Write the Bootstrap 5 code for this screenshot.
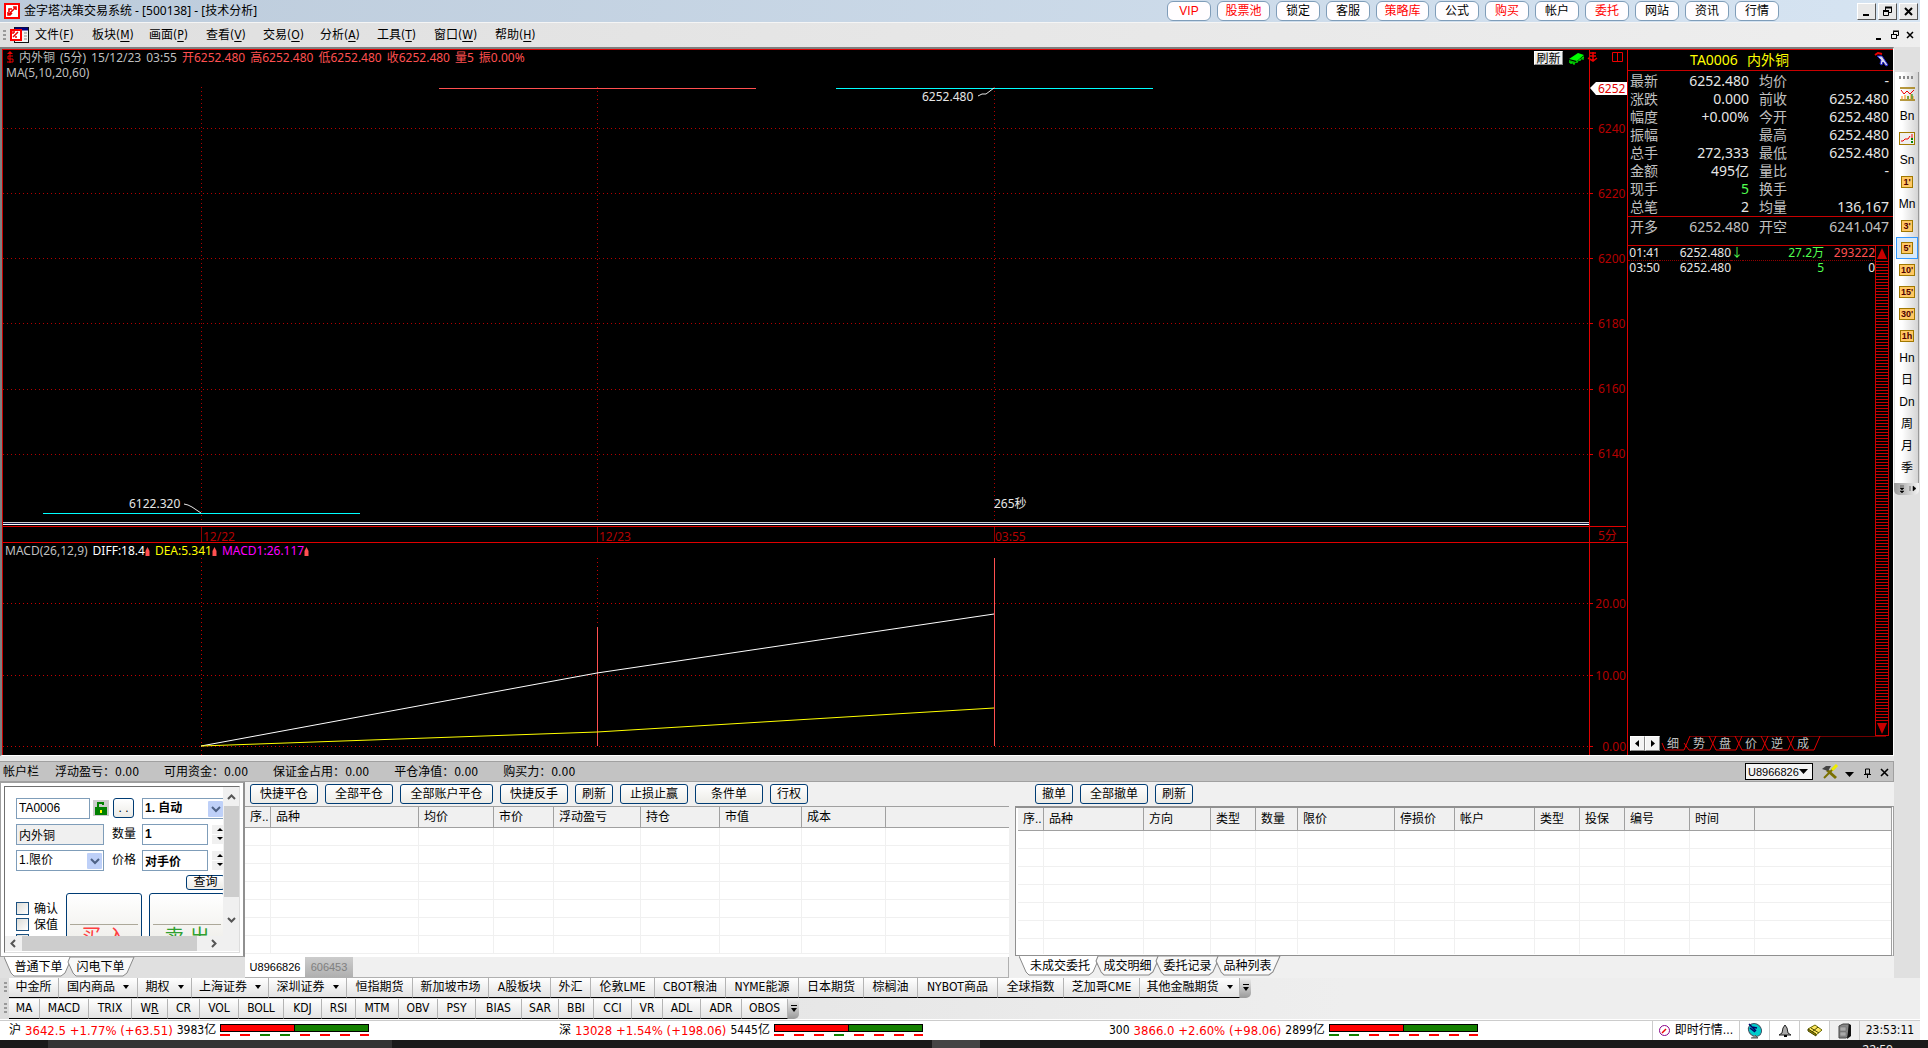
<!DOCTYPE html>
<html lang="zh-CN">
<head>
<meta charset="utf-8">
<meta name="viewport" content="width=device-width, initial-scale=1">
<title>金字塔决策交易系统</title>
<link href="https://cdn.jsdelivr.net/npm/bootstrap@5.3.0/dist/css/bootstrap.min.css" rel="stylesheet">
<style>
:root{--seg:"Noto Sans","Noto Sans CJK SC",sans-serif;--tah:"DejaVu Sans Condensed","DejaVu Sans","Noto Sans CJK SC",sans-serif;--sim:"Liberation Sans","Noto Sans CJK SC",sans-serif;--red:#c80000}
body{font:12px/16px var(--sim);color:#000;background:#fff;overflow:hidden}
button,input,select{font:inherit;color:inherit;padding:0;margin:0}
button{border:0;background:none;white-space:nowrap}
.app-window{margin-right:8px}
/* title and menu */
.title-bar{height:22px;background:linear-gradient(90deg,#bccbdb,#d6e4f2);font-family:var(--seg);padding-left:4px}
.quick-links{gap:6px;margin-right:78px}
.quick-links button{width:44px;height:20px;border:1px solid #7f9db9;border-radius:6px;background:#fffdff;font-family:var(--sim);line-height:16px}
.quick-links .wide{width:53px}
.hot{color:#f00}
.win-btns{gap:2px;padding-right:2px}
.win-btns button{width:19px;height:17px;background:#e8e8e8;border:1px solid;border-color:#fff #555 #555 #fff;display:flex;align-items:center;justify-content:center}
.menu-strip{height:25px;background:linear-gradient(90deg,#dfdfdf,#eee);font-family:var(--tah);padding-left:3px;border-top:1px solid #f5f5f5}
.menu-items{display:grid;grid-template-columns:repeat(7,57px) 61px 57px;margin-left:5px}
.menu-items a{color:#000;text-decoration:none}
.menu-items u{text-underline-offset:2px}
.grip{width:3px;height:10px;background:repeating-linear-gradient(#999 0 2px,transparent 2px 4px)}
/* chart */
.black-area{background:#000;border-top:2px solid #808080;border-left:2px solid #808080;border-right:1px solid #fff;border-bottom:1px solid #fff}
.chart-col{border-top:1px solid #e00000;border-left:1px solid var(--red);font-family:var(--seg);min-width:0}
.plot{display:block;width:100%;overflow:visible}
.plot text,.axis text{font:12px var(--seg)}
.axis{display:block;width:38px;flex:none;border-left:1px solid #e00000;overflow:visible}
.pane-a{border-bottom:1px solid #e00000}
.head-a{left:3px;top:0;line-height:15px;color:#bfbfbf;white-space:nowrap}
.head-b{left:2px;top:0;line-height:16px;color:#bfbfbf;white-space:nowrap}
.readout{display:flex;align-items:center;gap:5px}
.tools-a{right:0;top:1px;height:14px}
.tools-a button{background:#eee;color:#000;width:29px;height:14px;line-height:13px;border:1px solid;border-color:#fff #888 #888 #fff}
.salmon{color:#ff5050}
.c-yellow{color:#ff0}
.c-mag{color:#f0f}
/* quote */
.quote-col{width:266px;border-left:1px solid #e00000;border-top:1px solid #e00000;font:14px/18px var(--seg);color:#c0c0c0;flex:none}
.quote-title{height:21px;color:#ff0;border-bottom:1px solid var(--red);gap:9px;padding-right:42px}
.quote-list{display:grid;grid-template-columns:30px 89px 10px 30px 1fr;padding:1px 4px 0 2px;border-bottom:1px solid var(--red);white-space:nowrap}
.quote-list dd,.quote-list dt{margin:0;font-weight:400}
.quote-list dd{text-align:right;color:#e6e6e6}
.quote-list dt:nth-of-type(even){grid-column:4}
.q-open{height:29px}
.q-open dd{color:#c0c0c0}
.green{color:#50ff50 !important}
.ticks{font-size:12px;line-height:14px;table-layout:fixed;width:100%;color:#e6e6e6;border-collapse:collapse}
.ticks td{padding:0;text-align:right}
.ticks tr:first-child td{border-bottom:1px dotted #900000}
.v-scroll{width:16px;border:1px solid var(--red);border-top:0;border-bottom:0;background:repeating-linear-gradient(#c80000 0 1px,#000 1px 3px)}
.v-scroll button{height:16px;width:100%;background:#000;border-bottom:1px solid var(--red);display:flex;align-items:center;justify-content:center}
.v-scroll button:last-child{border-top:1px solid var(--red)}
.q-tabs{height:19px;padding-left:2px}
.q-tabs .arrow-btn{width:15px;height:15px;background:#f4f4f4;border:1px solid;border-color:#fff #888 #888 #fff;display:flex;align-items:center;justify-content:center}
.q-tabs .tab-box{height:15px}
.tab-box svg{left:0;top:0}
.q-tabs .names button{width:26px;color:#c0c0c0;font:12px/16px var(--sim)}
/* right rail */
.rail{width:26px;flex:none;background:#e0e0e0;padding-top:25px}
.rail-bar{width:24px;background:linear-gradient(90deg,#fff 30%,#d4d4d4);border-right:1px solid #999;margin-left:1px;padding:4px 0}
.rail-bar button{height:22px;width:22px;display:flex;align-items:center;justify-content:center;margin-left:1px}
.rail-bar b{font:bold 9px/10px var(--sim);background:#ffc864;border:1px solid #a07800;padding:0 1px;min-width:12px;height:12px;color:#500000}
.rail-bar .chosen{border:1px solid #3399ff;background:#d9eaf9}
.rail-dots{height:3px;width:14px;margin-left:4px;margin-bottom:4px;background:repeating-linear-gradient(90deg,#888 0 2px,transparent 2px 4px)}
.rail-foot{height:12px;width:25px;background:linear-gradient(90deg,#999,#f4f4f4);border-radius:0 0 5px 5px}
/* account bar */
.splitter{height:5px;background:#e6e6e6}
.acct{height:21px;background:#c3c3c3;border:1px solid #a0a0a0;border-left:0;padding-left:3px}
.acct span{margin-right:25px}
.acct .acct-name{margin-right:16px}
.acct b{font:12px var(--tah)}
.acct select{width:68px;height:17px;border:1px solid #000;background:#f4f4f4;appearance:none;font-size:11px;padding-left:2px;border-radius:0}
.caret-host{position:relative}
.caret-host svg{position:absolute;right:4px;top:6px;pointer-events:none}
.dock-bg{background:#f0f0f0}
/* order form */
.order-col{width:245px;flex:none;background:#e0e0e0}
.order-frame{height:175px;background:#fff;border:1px solid #a0a0a0;border-right:2px solid #909090;padding:3px}
.order-in{border:1px solid #707070;border-right-color:#ddd;border-bottom-color:#ddd;height:100%;display:grid;grid-template:149px 15px/218px 16px}
.order-view{overflow:hidden;padding:10px 0 0 11px}
.order-row{display:flex;align-items:center;height:22px;margin-bottom:4px;white-space:nowrap;width:230px}
.order-row label{margin:0 6px 0 8px}
.field{border:1px solid #7f9db9;height:21px;background:#fff;padding-left:2px;border-radius:0;appearance:none}
.w74{width:74px}.w87{width:88px}.w66{width:66px}.w80{width:83px}.w89{width:88px}
.read-only{background:#f0f0f0}
.drop{position:relative}
.drop svg{position:absolute;right:2px;top:3px;pointer-events:none}
.xp{height:20px;border:1px solid #003c74;border-radius:3px;background:linear-gradient(#fff,#ecebe6);line-height:18px;text-align:center}
.pick{width:21px;margin-right:8px}
.lock{margin:0 4px 0 3px}
.spin{display:flex;flex-direction:column;gap:1px}
.spin button{background:#f0f0f0;height:9px;width:15px;line-height:0}
.order-row.ask{height:14px;padding-left:170px}
.ask .xp{height:15px;line-height:12px;width:39px}
.deals{width:240px}
.checks{padding-top:9px;width:50px}
.checks label{display:flex;height:16px;align-items:flex-start;gap:5px;line-height:14px}
.checks input{appearance:none;width:13px;height:13px;border:1px solid #1d5281;background:linear-gradient(135deg,#dcdcd7,#fff)}
.deal{width:76px;height:60px;margin-right:7px;padding:27px 3px 0;font-size:20px;line-height:24px}
.deal span{display:block;border-top:1px solid #aca899}
.buy{color:#ff4040}.sell{color:#30a030}
.sb{background:#f0f0f0;display:flex;align-items:center}
.sb i{background:#cdcdcd;display:block}
.sb.vert{flex-direction:column;padding:7px 0 13px}
.sb.vert i{width:15px;height:100px;margin:6px 0 20px}
.sb.horz{padding-left:5px}
.sb.horz i{height:15px;width:175px;margin:0 14px 0 6px}
.slant{height:21px}
.slant button{position:relative;height:20px;width:69px;margin-right:-7px;line-height:20px}
.slant svg{position:absolute;left:0;top:0;width:100%;height:100%;z-index:0}
.slant span{position:relative;z-index:1}
.slant .t82{width:82px}.slant .t67{width:67px}
/* grids */
.btn-strip{height:24px;gap:7px;padding:2px 0 0 5px}
.b68{width:68px}.b93{width:93px}.b38{width:38px}
.data-grid{table-layout:fixed;width:100%;border-collapse:separate;border-spacing:0;background:#fff}
.data-grid th{font-weight:400;background:#f0f0f0;height:21px;padding:0 0 0 5px;line-height:18px;border-right:1px solid #a0a0a0;border-bottom:1px solid #a0a0a0;white-space:nowrap;overflow:hidden}
.data-grid td{height:18px;padding:0;border-right:1px solid #f0f0f0;border-bottom:1px solid #f0f0f0}
.data-grid th:last-child,.data-grid td:last-child{border-right:0}
.pos-col{flex:0 0 764px}
.pos-grid{border-top:1px solid #a0a0a0;height:151px;background:#fff}
.pos-tabs{height:21px;border-bottom:1px solid #b0b0b0;border-right:1px solid #b0b0b0;font-size:11px;background:#f0f0f0}
.pos-tabs button{width:60px;background:#fff}
.pos-tabs button+button{width:48px;background:linear-gradient(#ccc,#b0b0b0);color:#808080}
.ord-col{min-width:0;margin-left:6px}
.ord-frame{border:1px solid #909090;border-top-width:2px;border-right:3px double #a0a0a0;height:150px;padding-left:2px;background:#fff}
.ord-frame th{height:23px}
.ord-frame tr:last-child td{height:15px;border-bottom:0}
.ord-col .btn-strip{padding-left:20px}
/* toolbars */
.bars{background:linear-gradient(90deg,#dcdcdc,#eee 70%)}
.tool-line{display:grid;height:20px;margin-bottom:1px;justify-content:start;font-family:var(--tah)}
.tool-line button{background:linear-gradient(#fff,#e2e2e2);border-bottom:1px solid #000;border-right:1px solid #b4b4b4;line-height:19px;text-align:center}
.tool-line .caret::after{content:"";display:inline-block;border:3px solid transparent;border-top:4px solid #000;border-bottom:0;margin:0 0 2px 8px}
.tool-line .more{background:linear-gradient(#eee,#999);border:0;border-radius:0 0 5px 0;line-height:0}
.markets{grid-template-columns:9px 50px 79px 54px 77px 78px 66px 76px 62px 40px 64px 71px 73px 65px 54px 80px 66px 76px 100px 11px}
.inds{grid-template-columns:9px 31px 49px 43px 36px 32px 39px 45px 38px 34px 43px 39px 38px 46px 37px 35px 38px 31px 38px 41px 46px 11px}
.status{height:20px;border-top:1px solid #ccc;font-family:var(--tah);line-height:19px}
.idx{width:550px;padding-left:9px;gap:4px}
.idx:nth-child(3){flex:1 1 0;min-width:0}
.idx .n{font-size:13px}
.meter{width:149px}
.s-box{border-left:1px solid #ccc;display:flex;align-items:center;justify-content:center;width:30px;flex:none}
.s-feed{width:87px;gap:5px}
.s-time{width:61px}
.s-gray{background:#f0f0f0}
.os-bar{height:8px;background:linear-gradient(90deg,#1a1a1a 48px,#333 48px 392px,#1a1a1a 392px 932px,#444 932px 980px,#1a1a1a 980px);color:#eee;overflow:hidden;padding:3px 35px 0 0;text-align:right;font:12px/14px var(--seg)}
</style>
</head>
<body>
<div class="app-window">
<header>
 <div class="title-bar d-flex align-items-center">
  <svg width="16" height="16" class="me-1"><rect width="16" height="16" fill="#f00"/><rect x="2" y="2" width="12" height="12" fill="#fff"/><path d="M5 11l6-6M9 4h3v3M5 9V6h3M8 10l-2 2H4V9" fill="none" stroke="#e00" stroke-width="1.600"/></svg>
  <span>金字塔决策交易系统 - [500138] - [技术分析]</span>
  <nav class="quick-links d-flex ms-auto" aria-label="快捷">
   <button class="hot">VIP</button><button class="hot wide">股票池</button><button>锁定</button><button>客服</button><button class="hot wide">策略库</button><button>公式</button><button class="hot">购买</button><button>帐户</button><button class="hot">委托</button><button>网站</button><button>资讯</button><button>行情</button>
  </nav>
  <div class="win-btns d-flex">
   <button aria-label="最小化"><svg width="11" height="11"><path d="M2 9h6" stroke="#000" stroke-width="2"/></svg></button>
   <button aria-label="还原"><svg width="11" height="11" fill="none" stroke="#000"><path d="M3.500 4V1.500h6v5H7"/><path d="M3 1.500h7M1 5h6" stroke-width="2"/><path d="M1.500 5v4.500h5V5"/></svg></button>
   <button aria-label="关闭"><svg width="11" height="11"><path d="M2 2l7 7M9 2l-7 7" stroke="#000" stroke-width="2"/></svg></button>
  </div>
 </div>
 <div class="menu-strip d-flex align-items-center">
  <span class="grip"></span>
  <svg width="20" height="17" class="ms-1"><rect x="4.500" y=".5" width="14" height="15" fill="#f4f4f4" stroke="#111"/><path d="M5 2h13" stroke="#000080" stroke-width="3"/><path d="M14 6h3M14 9h3M14 12h3" stroke="#888"/><rect y="2" width="12" height="12" fill="#f00"/><rect x="2" y="4" width="8" height="8" fill="#fff"/><path d="M3 10l5-5M3 7V5h2M7 10H5" fill="none" stroke="#e00" stroke-width="1.500"/></svg>
  <nav class="menu-items"><a href="#">文件(<u>F</u>)</a><a href="#">板块(<u>M</u>)</a><a href="#">画面(<u>P</u>)</a><a href="#">查看(<u>V</u>)</a><a href="#">交易(<u>O</u>)</a><a href="#">分析(<u>A</u>)</a><a href="#">工具(<u>T</u>)</a><a href="#">窗口(<u>W</u>)</a><a href="#">帮助(<u>H</u>)</a></nav>
  <svg width="44" height="12" class="ms-auto me-1" fill="none" stroke="#000"><path d="M4 10h5" stroke-width="2"/><path d="M21.500 5V2.500h5v4H25M19.500 5.500h5v4h-5zM21 2h6M19 5.500h6"/><path d="M35 3l6 6M41 3l-6 6" stroke-width="1.500"/></svg>
 </div>
</header>

<div class="d-flex">
<main class="flex-grow-1 overflow-hidden">
 <div class="black-area d-flex">
  <section class="chart-col flex-grow-1">
   <div class="pane-a d-flex position-relative">
    <svg class="plot" height="492">
     <g stroke="#b40000" stroke-dasharray="1 3"><path d="M198.500 37V470M594.500 37V470M991.500 37V470"/>
     <line x1="0" x2="100%" y1="78.500" y2="78.500"/><line x1="0" x2="100%" y1="143.500" y2="143.500"/><line x1="0" x2="100%" y1="208.500" y2="208.500"/><line x1="0" x2="100%" y1="273.500" y2="273.500"/><line x1="0" x2="100%" y1="339.500" y2="339.500"/><line x1="0" x2="100%" y1="404.500" y2="404.500"/></g>
     <path d="M436 38.500H753" stroke="#ff5050"/><path d="M833 38.500H1150M40 463.500H357" stroke="#0ff"/>
     <path d="M975 46l4-2h4l8-6M181 454l4 1 4 2 9 6" stroke="#e6e6e6" fill="none"/>
     <text x="919" y="51" fill="#e6e6e6">6252.480</text><text x="126" y="458" fill="#e6e6e6">6122.320</text><text x="991" y="458" fill="#e6e6e6">265秒</text>
     <line x1="0" x2="100%" y1="472.500" y2="472.500" stroke="#ccc"/><line x1="0" x2="100%" y1="473.500" y2="473.500" stroke="#0a1440"/><line x1="0" x2="100%" y1="474.500" y2="474.500" stroke="#fff"/>
     <line x1="0" x2="100%" y1="476.500" y2="476.500" stroke="#e00000"/>
     <path d="M198.500 477v15M594.500 477v15M991.500 477v15" stroke="#900000"/>
     <g fill="#b40000"><text x="200" y="491">12/22</text><text x="596" y="491">12/23</text><text x="992" y="491">03:55</text></g>
    </svg>
    <svg class="axis" height="492">
     <path d="M0 78.500h3M0 143.500h3M0 208.500h3M0 273.500h3M0 339.500h3M0 404.500h3M0 476.500h36" stroke="#e00000"/>
     <path d="M0 38l6-6h31v13H6z" fill="#fff"/><text x="8" y="43" fill="#e00000">6252</text>
     <g fill="#b40000"><text x="8" y="83">6240</text><text x="8" y="148">6220</text><text x="8" y="213">6200</text><text x="8" y="278">6180</text><text x="8" y="343">6160</text><text x="8" y="408">6140</text><text x="8" y="490">5分</text></g>
    </svg>
    <div class="head-a position-absolute">
     <div class="readout"><svg width="8" height="13"><path d="M1 3l3-3 3 3z" fill="#e00"/><path d="M7 5H2v3h5v3H1M4 3v9" fill="none" stroke="#e00"/></svg><span>内外铜</span><span>(5分)</span><span>15/12/23</span><span>03:55</span><span class="salmon">开6252.480</span><span class="salmon">高6252.480</span><span class="salmon">低6252.480</span><span class="salmon">收6252.480</span><span class="salmon">量5</span><span class="salmon">振0.00%</span></div>
     <div>MA(5,10,20,60)</div>
    </div>
    <div class="tools-a d-flex position-absolute"><button>刷新</button>
     <svg width="60" height="14" class="ms-1"><path d="M2 8l9-6 6 2-7 6z" fill="#0f0"/><path d="M2 9v3l5 1 10-6V5l-8 6z" fill="#00b400"/><path d="M4 13v-2M7 14v-2M10 12v-2M13 10V8M16 9V6" stroke="#0f0"/><path d="M26 1v8M23 2h6M23 5h6M21 7l5 3 4-3" fill="none" stroke="#e00" stroke-width="1.500"/><path d="M45.500 1.500h10v9h-10zM50.500 1v10" fill="none" stroke="#e00"/></svg></div>
   </div>
   <div class="d-flex position-relative">
    <svg class="plot" height="212">
     <g stroke="#c80000" stroke-dasharray="1 3"><path d="M198.500 15V212M594.500 15V83"/><line x1="0" x2="100%" y1="60.500" y2="60.500"/><line x1="0" x2="100%" y1="132.500" y2="132.500"/><line x1="0" x2="100%" y1="203.500" y2="203.500"/></g>
     <path d="M594.500 84V203M991.500 15V203" stroke="#ff5050"/>
     <path d="M198 203L594 130 991 71" stroke="#fff" fill="none"/><path d="M198 203L594 189 991 165" stroke="#ff0" fill="none"/>
    </svg>
    <svg class="axis" height="212"><path d="M0 60.500h3M0 132.500h3M0 203.500h3" stroke="#e00000"/><g fill="#b40000" text-anchor="end"><text x="36" y="65">20.00</text><text x="36" y="137">10.00</text><text x="36" y="208">0.00</text></g></svg>
    <div class="head-b readout position-absolute"><span>MACD(26,12,9)</span><span class="text-white">DIFF:18.4<svg width="5" height="9"><path d="M2.500 0l2 4v5h-4V4z" fill="#ff5050"/></svg></span><span class="c-yellow">DEA:5.341<svg width="5" height="9"><path d="M2.500 0l2 4v5h-4V4z" fill="#ff5050"/></svg></span><span class="c-mag">MACD1:26.117<svg width="5" height="9"><path d="M2.500 0l2 4v5h-4V4z" fill="#ff5050"/></svg></span></div>
   </div>
  </section>
  <aside class="quote-col d-flex flex-column">
   <div class="quote-title d-flex justify-content-center align-items-center position-relative"><span>TA0006</span><span>内外铜</span>
    <svg class="position-absolute end-0 me-1" width="16" height="16"><path d="M2 3L5 1l4 1" stroke="#e00" stroke-width="2" fill="none"/><path d="M4 4h5l6 9-2 1-3-4-1 3-2-1 1-4-2-2z" fill="#d8d8e8" stroke="#22c"/></svg></div>
   <dl class="quote-list mb-0"><dt>最新</dt><dd>6252.480</dd><dt>均价</dt><dd>-</dd><dt>涨跌</dt><dd>0.000</dd><dt>前收</dt><dd>6252.480</dd><dt>幅度</dt><dd>+0.00%</dd><dt>今开</dt><dd>6252.480</dd><dt>振幅</dt><dd>&nbsp;</dd><dt>最高</dt><dd>6252.480</dd><dt>总手</dt><dd>272,333</dd><dt>最低</dt><dd>6252.480</dd><dt>金额</dt><dd>495亿</dd><dt>量比</dt><dd>-</dd><dt>现手</dt><dd class="green">5</dd><dt>换手</dt><dd>&nbsp;</dd><dt>总笔</dt><dd>2</dd><dt>均量</dt><dd>136,167</dd></dl>
   <dl class="quote-list q-open mb-0"><dt>开多</dt><dd>6252.480</dd><dt>开空</dt><dd>6241.047</dd></dl>
   <div class="d-flex flex-grow-1">
    <div class="flex-grow-1"><table class="ticks"><colgroup><col style="width:32px"><col style="width:71px"><col style="width:12px"><col style="width:81px"><col></colgroup><tbody><tr><td>01:41</td><td>6252.480</td><td class="green">↓</td><td class="green">27.2万</td><td class="salmon">293222</td></tr><tr><td>03:50</td><td>6252.480</td><td></td><td class="green">5</td><td>0</td></tr></tbody></table></div>
    <div class="v-scroll d-flex flex-column justify-content-between me-1"><button aria-label="上"><svg width="12" height="11"><path d="M6 0l5 11H1z" fill="#c80000"/></svg></button><button aria-label="下"><svg width="12" height="11"><path d="M6 11L1 0h10z" fill="#c80000"/></svg></button></div>
   </div>
   <div class="q-tabs d-flex">
    <button class="arrow-btn" aria-label="左"><svg width="5" height="7"><path d="M4 0v7L0 3.500z"/></svg></button><button class="arrow-btn" aria-label="右"><svg width="5" height="7"><path d="M1 0v7l4-3.500z"/></svg></button>
    <div class="tab-box position-relative flex-grow-1"><svg class="position-absolute" width="228" height="16" fill="none" stroke="#e00000"><path d="M2 7l3 7h19l6-14H226M24 7l5 7h21l6-14M49 0l7 14h20l6-14M75 0l7 14h20l6-14M101 0l7 14h20l6-14M127 0l7 14h20l6-14"/></svg><div class="names d-flex position-relative"><button>细</button><button>势</button><button>盘</button><button>价</button><button>逆</button><button>成</button></div></div>
   </div>
  </aside>
 </div>
 <div class="splitter"></div>
 <section class="acct d-flex align-items-center"><span class="acct-name">帐户栏</span><span>浮动盈亏：<b>0.00</b></span><span>可用资金：<b>0.00</b></span><span>保证金占用：<b>0.00</b></span><span>平仓净值：<b>0.00</b></span><span>购买力：<b>0.00</b></span>
  <div class="caret-host ms-auto me-2"><select aria-label="帐户"><option>U8966826</option></select><svg width="10" height="6"><path d="M0 0h9L4.500 5z"/></svg></div>
  <svg width="72" height="16"><path d="M6 6l9 8" stroke="#7a7000" stroke-width="3"/><path d="M3 14L14 3" stroke="#7a7000" stroke-width="2"/><path d="M11 6l5-5" stroke="#ee0" stroke-width="3"/><path d="M1 5l4-3 5 0-3 5z" fill="#444"/><path d="M24 8h9l-4.500 5zM" /><path d="M43 10.500h7M44.500 5v5h4V5zM46.500 10v4" fill="none" stroke="#000"/><path d="M60 5l7 7M67 5l-7 7" stroke="#000" stroke-width="1.600"/></svg>
 </section>
 <div class="dock-bg d-flex">
  <section class="order-col">
   <div class="order-frame"><div class="order-in">
    <div class="order-view">
     <div class="order-row"><input class="field w74" value="TA0006" aria-label="代码"><svg class="lock" width="16" height="16"><rect width="16" height="16" fill="#ccc"/><path d="M5 8V3h5v2" fill="none" stroke="#008000" stroke-width="2"/><rect x="2" y="7" width="12" height="8" fill="#008000"/><path d="M8 10v3" stroke="#ff0" stroke-width="2"/></svg><button class="xp pick">. .</button><span class="drop"><select class="field w80 fw-bold" aria-label="开平"><option>1. 自动</option></select><svg width="15" height="16"><rect width="15" height="16" rx="1" fill="#bed0f8"/><path d="M4 6l4 4 4-4" fill="none" stroke="#4d6185" stroke-width="2"/></svg></span></div>
     <div class="order-row"><input class="field w87 read-only" value="内外铜" aria-label="名称"><label for="qty">数量</label><input id="qty" class="field w66 fw-bold me-1" value="1"><span class="spin"><button aria-label="加"><svg width="6" height="4"><path d="M0 4l3-3 3 3z"/></svg></button><button aria-label="减"><svg width="6" height="4"><path d="M0 0l3 3 3-3z"/></svg></button></span></div>
     <div class="order-row"><span class="drop"><select class="field w89" aria-label="价格类型"><option>1.限价</option></select><svg width="15" height="16"><rect width="15" height="16" rx="1" fill="#bed0f8"/><path d="M4 6l4 4 4-4" fill="none" stroke="#4d6185" stroke-width="2"/></svg></span><label for="px">价格</label><input id="px" class="field w66 fw-bold me-1" value="对手价"><span class="spin"><button aria-label="加"><svg width="6" height="4"><path d="M0 4l3-3 3 3z"/></svg></button><button aria-label="减"><svg width="6" height="4"><path d="M0 0l3 3 3-3z"/></svg></button></span></div>
     <div class="order-row ask"><button class="xp">查询</button></div>
     <div class="deals d-flex"><div class="checks"><label><input type="checkbox">确认</label><label><input type="checkbox">保值</label><label><input type="checkbox" aria-label="选项"></label></div><button class="xp deal"><span class="buy">买 入</span></button><button class="xp deal"><span class="sell">卖 出</span></button></div>
    </div>
    <div class="sb vert"><svg width="9" height="6"><path d="M1 5l3.500-3.500L8 5" fill="none" stroke="#555" stroke-width="2"/></svg><i></i><svg width="9" height="6"><path d="M1 1l3.500 3.500L8 1" fill="none" stroke="#555" stroke-width="2"/></svg></div>
    <div class="sb horz"><svg width="6" height="9"><path d="M5 1L1.500 4.500 5 8" fill="none" stroke="#555" stroke-width="2"/></svg><i></i><svg width="6" height="9"><path d="M1 1l3.500 3.500L1 8" fill="none" stroke="#555" stroke-width="2"/></svg></div><div class="sb"></div>
   </div></div>
   <div class="slant d-flex ps-1"><button><svg viewBox="0 0 69 20" preserveAspectRatio="none"><path d="M0 0l7 16 3 3h47l4-3 7-16" fill="#fff" stroke="#888"/></svg><span>普通下单</span></button><button><svg viewBox="0 0 69 20" preserveAspectRatio="none"><path d="M2 5l5 11 3 3h47l4-3 7-16H4z" fill="#f8f8f8" stroke="#888"/></svg><span>闪电下单</span></button></div>
  </section>
  <section class="pos-col">
   <div class="btn-strip d-flex"><button class="xp b68">快捷平仓</button><button class="xp b68">全部平仓</button><button class="xp b93">全部账户平仓</button><button class="xp b68">快捷反手</button><button class="xp b38">刷新</button><button class="xp b68">止损止赢</button><button class="xp b68">条件单</button><button class="xp b38">行权</button></div>
   <div class="pos-grid"><table class="data-grid"><colgroup><col style="width:26px"><col style="width:148px"><col style="width:75px"><col style="width:60px"><col style="width:87px"><col style="width:79px"><col style="width:82px"><col style="width:84px"><col></colgroup><thead><tr><th>序..</th><th>品种</th><th>均价</th><th>市价</th><th>浮动盈亏</th><th>持仓</th><th>市值</th><th>成本</th><th></th></tr></thead><tbody id="posRows"></tbody></table></div>
   <div class="pos-tabs d-flex"><button>U8966826</button><button>606453</button></div>
  </section>
  <section class="ord-col flex-grow-1">
   <div class="btn-strip d-flex"><button class="xp b38">撤单</button><button class="xp b68">全部撤单</button><button class="xp b38">刷新</button></div>
   <div class="ord-frame"><table class="data-grid"><colgroup><col style="width:26px"><col style="width:100px"><col style="width:67px"><col style="width:45px"><col style="width:42px"><col style="width:97px"><col style="width:60px"><col style="width:80px"><col style="width:45px"><col style="width:45px"><col style="width:65px"><col style="width:65px"><col></colgroup><thead><tr><th>序..</th><th>品种</th><th>方向</th><th>类型</th><th>数量</th><th>限价</th><th>停损价</th><th>帐户</th><th>类型</th><th>投保</th><th>编号</th><th>时间</th><th></th></tr></thead><tbody id="ordRows"></tbody></table></div>
   <div class="slant d-flex ps-1"><button class="t82"><svg viewBox="0 0 82 20" preserveAspectRatio="none"><path d="M0 0l7 16 3 3h60l4-3 7-16" fill="#fff" stroke="#888"/></svg><span>未成交委托</span></button><button class="t67"><svg viewBox="0 0 66 20" preserveAspectRatio="none"><path d="M2 5l5 11 3 3h44l4-3 7-16H4z" fill="#f8f8f8" stroke="#888"/></svg><span>成交明细</span></button><button class="t67"><svg viewBox="0 0 66 20" preserveAspectRatio="none"><path d="M2 5l5 11 3 3h44l4-3 7-16H4z" fill="#f8f8f8" stroke="#888"/></svg><span>委托记录</span></button><button class="t67"><svg viewBox="0 0 66 20" preserveAspectRatio="none"><path d="M2 5l5 11 3 3h44l4-3 7-16H4z" fill="#f8f8f8" stroke="#888"/></svg><span>品种列表</span></button></div>
  </section>
 </div>
</main>
<aside class="rail">
 <div class="rail-bar"><div class="rail-dots"></div>
  <button aria-label="走势"><svg width="15" height="14"><path d="M0 1h15M0 13h15" stroke="#a07800" stroke-width="1.500"/><path d="M1 3l3 4 3-3 3 3 4-4" fill="none" stroke="#e00"/><path d="M2 12V9M5 12V8M8 12V9M11 12V7M13 12V9" stroke="#f80"/><path d="M8 12V9M12 12V7" stroke="#080"/></svg></button><button>Bn</button>
  <button aria-label="分时"><svg width="16" height="13"><rect x=".5" y=".5" width="15" height="12" fill="#eee" stroke="#a07800"/><path d="M2 9h2l2-2h3l2-3" fill="none" stroke="#e00"/><path d="M12 3h2M12 5h2" stroke="#e00"/><path d="M12 7h2M12 10h2" stroke="#080" stroke-width="2"/></svg></button><button>Sn</button><button><b>1'</b></button><button>Mn</button><button><b>3'</b></button><button class="chosen"><b>5'</b></button><button><b>10'</b></button><button><b>15'</b></button><button><b>30'</b></button><button><b>1h</b></button><button>Hn</button><button>日</button><button>Dn</button><button>周</button><button>月</button><button>季</button></div>
 <div class="rail-foot d-flex align-items-center justify-content-end"><svg width="20" height="8"><path d="M1 1h4M1 3h4L3 5zM1 6h4L3 8zM11 1v5M14 1v5l3-2.500z" stroke="#000" stroke-width=".5"/></svg></div>
</aside>
</div>

<div class="bars">
 <div class="tool-line markets"><span class="grip ms-1 mt-1"></span><button>中金所</button><button class="caret">国内商品</button><button class="caret">期权</button><button class="caret">上海证券</button><button class="caret">深圳证券</button><button>恒指期货</button><button>新加坡市场</button><button>A股板块</button><button>外汇</button><button>伦敦LME</button><button>CBOT粮油</button><button>NYME能源</button><button>日本期货</button><button>棕榈油</button><button>NYBOT商品</button><button>全球指数</button><button>芝加哥CME</button><button class="caret">其他金融期货</button><button class="more" aria-label="更多"><svg width="6" height="8"><path d="M0 0h6v1H0zM0 3h6L3 7z"/></svg></button></div>
 <div class="tool-line inds"><span class="grip ms-1 mt-1"></span><button>MA</button><button>MACD</button><button>TRIX</button><button>W<u>R</u></button><button>CR</button><button>VOL</button><button>BOLL</button><button>KDJ</button><button>RSI</button><button>MTM</button><button>OBV</button><button>PSY</button><button>BIAS</button><button>SAR</button><button>BBI</button><button>CCI</button><button>VR</button><button>ADL</button><button>ADR</button><button>OBOS</button><button class="more" aria-label="更多"><svg width="6" height="8"><path d="M0 0h6v1H0zM0 3h6L3 7z"/></svg></button></div>
</div>
<footer class="status d-flex bg-white">
 <div class="idx d-flex align-items-center"><span>沪</span><span class="hot n">3642.5 +1.77% (+63.51)</span><span>3983亿</span><svg class="meter" height="13"><rect x=".5" y=".5" width="74" height="7" fill="#f00" stroke="#000"/><rect x="74.500" y=".5" width="74" height="7" fill="#148000" stroke="#000"/><path d="M0 11h149" stroke="#f00" stroke-width="2" stroke-dasharray="10 10"/><path d="M40 11h30" stroke="#148000" stroke-width="2" stroke-dasharray="10 10"/></svg></div>
 <div class="idx d-flex align-items-center"><span>深</span><span class="hot n">13028 +1.54% (+198.06)</span><span>5445亿</span><svg class="meter" height="13"><rect x=".5" y=".5" width="74" height="7" fill="#f00" stroke="#000"/><rect x="74.500" y=".5" width="74" height="7" fill="#148000" stroke="#000"/><path d="M0 11h149" stroke="#f00" stroke-width="2" stroke-dasharray="10 10"/><path d="M60 11h10" stroke="#148000" stroke-width="2"/></svg></div>
 <div class="idx d-flex align-items-center"><span>300</span><span class="hot n">3866.0 +2.60% (+98.06)</span><span>2899亿</span><svg class="meter" height="13"><rect x=".5" y=".5" width="74" height="7" fill="#f00" stroke="#000"/><rect x="74.500" y=".5" width="74" height="7" fill="#148000" stroke="#000"/><path d="M0 11h149" stroke="#f00" stroke-width="2" stroke-dasharray="10 10"/><path d="M0 11h30" stroke="#148000" stroke-width="2" stroke-dasharray="10 10"/></svg></div>
 <div class="s-box s-feed"><svg width="11" height="11"><circle cx="5.500" cy="5.500" r="5" fill="#fff" stroke="#808"/><path d="M3 8l4-4" stroke="#e00" stroke-width="1.500"/></svg><span>即时行情...</span></div>
 <div class="s-box"><svg width="16" height="16"><ellipse cx="8" cy="7" rx="7" ry="6" fill="#0cc" stroke="#456" transform="rotate(40 8 7)"/><path d="M2 1l7 7M3 5l5 4M5 4l5 1" stroke="#006" stroke-width="1.500"/><path d="M4 15h7l-3-3" fill="#888" stroke="#555"/></svg></div>
 <div class="s-box"><svg width="14" height="14"><path d="M7 1l2 3 1 5 3 2H1l3-2 1-5z" fill="#aaa" stroke="#222"/><path d="M6 12h3" stroke="#000" stroke-width="2"/></svg></div>
 <div class="s-box"><svg width="16" height="13"><path d="M1 5l7-4 7 5-6 5z" fill="#ffe860" stroke="#660"/><path d="M1 5v2l8 5v-2zM4 4l8 5M11 3L5 8" fill="#980" stroke="#440"/></svg></div>
 <div class="s-box s-gray"><svg width="14" height="16"><path d="M1 3l4-2h6v12l-3 2H1z" fill="#888" stroke="#444"/><path d="M11 1l2 1v11l-4 3" fill="#111"/><path d="M2 4h6v4H2zM2 9h6v4H2z" fill="#aaa" stroke="#666" stroke-width=".5"/></svg></div>
 <div class="s-box s-time s-gray">23:53:11</div>
</footer>
</div>
<div class="os-bar">22:50</div>
<script>
const fill=(id,rows,cols)=>{document.getElementById(id).innerHTML=('<tr>'+'<td></td>'.repeat(cols)+'</tr>').repeat(rows)};
fill('posRows',7,9);fill('ordRows',7,13);
</script>
<script src="https://cdn.jsdelivr.net/npm/bootstrap@5.3.0/dist/js/bootstrap.bundle.min.js"></script>
</body>
</html>
